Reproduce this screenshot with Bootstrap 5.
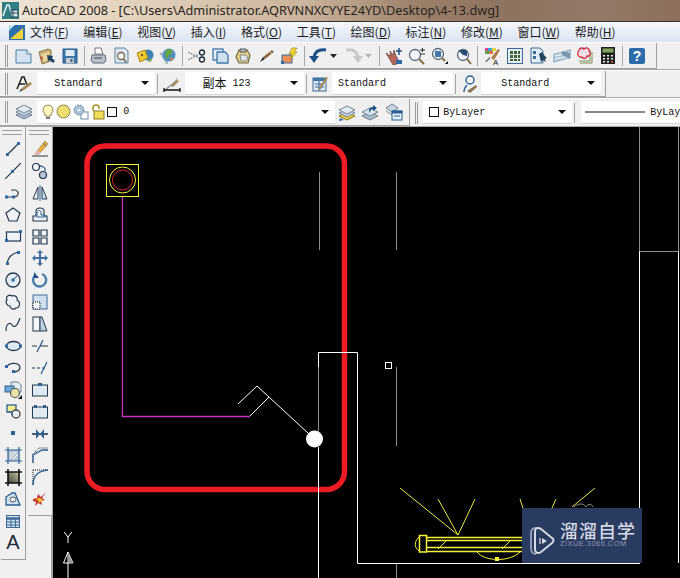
<!DOCTYPE html>
<html lang="zh">

<head>
    <meta charset="UTF-8">
    <title>AutoCAD 2008</title>
    <link href="https://cdn.jsdelivr.net/npm/bootstrap@5.3.0/dist/css/bootstrap.min.css" rel="stylesheet">
    <style>
        body {
            width: 680px;
            height: 578px;
            overflow: hidden;
            background-color: #f0f0f0;
            font-family: "Noto Sans", "Noto Sans CJK SC", sans-serif;
        }

        svg {
            display: block;
            flex: none;
        }

        .titlebar {
            height: 22px;
            padding-left: 2px;
            gap: 3px;
            font-size: 12.7px;
            color: #2a2420;
            white-space: nowrap;
            border-bottom: 1px solid #3a3028;
            background: linear-gradient(90deg, #efe6d8 0, #e2d2bd 20%, #c9b39c 45%, #9a7f69 62%, #8d7461 75%, #937a68 88%, #8b6f5b 100%);
        }

        .menubar {
            height: 20px;
            padding-left: 8px;
            font-family: "Noto Sans CJK SC", sans-serif;
            font-size: 12px;
            color: #1c1c1c;
            white-space: nowrap;
            background: linear-gradient(180deg, #f4f7fb, #dbe5f2);
        }

        .menubar span {
            margin-left: 14.6px;
        }

        .menubar span:first-of-type {
            margin-left: 4px;
        }

        .menubar u {
            text-underline-offset: 1px;
        }

        .toolrow {
            height: 28px;
            border-bottom: 1px solid #a8a8a8;
            border-top: 1px solid #fff;
        }

        .toolset {
            height: 100%;
            background-color: #f0f0f0;
            border-right: 1px solid #a0a0a0;
            border-bottom: 1px solid #a0a0a0;
        }

        .gripper {
            width: 3px;
            height: 22px;
            margin: 0 1px 0 5px;
            border-left: 1px solid #9c9c9c;
            border-right: 1px solid #9c9c9c;
            flex: none;
        }

        .tbtn {
            width: 23.3px;
            height: 22px;
            flex: none;
        }

        .tbtn-small {
            width: 12px;
            height: 22px;
            flex: none;
        }

        .tsep {
            width: 1px;
            height: 20px;
            margin: 0 2px;
            background-color: #a6a6a6;
            flex: none;
        }

        .combo {
            height: 23px;
            padding-right: 6px;
            background-color: #fff;
            border-bottom: 1px solid #d8d8d8;
            font-family: "Liberation Mono", "Noto Sans CJK SC", monospace;
            font-size: 10px;
            color: #111;
            white-space: nowrap;
            flex: none;
        }

        .combo-first {
            margin-left: 2px;
        }

        .combo-caret {
            width: 0;
            height: 0;
            margin-left: auto;
            border-left: 4px solid transparent;
            border-right: 4px solid transparent;
            border-top: 4px solid #111;
            flex: none;
        }

        .combo-sw {
            width: 10px;
            height: 10px;
            border: 1px solid #111;
            background-color: #fff;
            flex: none;
        }

        .workarea {
            height: 452px;
        }

        .dock {
            width: 53px;
            flex: none;
            border-right: 2px solid #a4a4a4;
        }

        .dock-col {
            width: 25px;
            padding-top: 1px;
            background-color: #f0f0f0;
            border-right: 1px solid #a0a0a0;
            border-bottom: 1px solid #a0a0a0;
            align-self: flex-start;
        }

        .dock-grip {
            width: 20px;
            height: 5px;
            margin: 2px 1px 3px;
            border-top: 1px solid #a0a0a0;
            border-bottom: 1px solid #a0a0a0;
        }

        .dbtn {
            width: 24px;
            height: 21.9px;
        }

        .canvas-wrap {
            background-color: #000;
            position: relative;
            overflow: hidden;
        }

        .watermark {
            position: absolute;
            left: 469px;
            top: 381px;
            width: 120px;
            height: 55px;
            padding: 13px 0 0 8px;
            background-color: #2a3b62;
            gap: 5px;
        }

        .wm-name {
            font-family: "Noto Sans CJK SC", sans-serif;
            font-size: 18px;
            line-height: 18px;
            letter-spacing: 1px;
            font-weight: 500;
            color: #d5d9e2;
            white-space: nowrap;
        }

        .wm-site {
            margin-top: 1px;
            font-family: "Liberation Sans", sans-serif;
            font-size: 7.4px;
            line-height: 8px;
            letter-spacing: .5px;
            color: #8d98b4;
            white-space: nowrap;
        }

        .k {
            fill: none;
            stroke: #25384f;
            stroke-width: 1.2;
        }

        .b {
            fill: #2c6aa6;
        }
    </style>
</head>

<body>
    <div class="titlebar d-flex align-items-center">
        <svg width="17" height="17" viewBox="0 0 17 17">
            <rect width="17" height="17" fill="#2f7f86" />
            <path d="M1 14 5 3h2l3 11" fill="none" stroke="#e8f4f0" stroke-width="1.5" />
            <rect x="9" y="8" width="7" height="7" fill="#dfeaf0" stroke="#1d4a55" />
            <path d="M11 8v7M9 11h7" stroke="#1d4a55" />
        </svg>
        <span>AutoCAD 2008 - [C:\Users\Administrator.AQRVNNXCYYE24YD\Desktop\4-13.dwg]</span>
    </div>

    <div class="menubar d-flex align-items-center">
        <svg width="18" height="18" viewBox="0 0 18 18">
            <rect x="1" y="2" width="16" height="15" fill="#2f6fa8" />
            <path d="M2 16 15 5v11z" fill="#f4d23e" />
            <path d="M1 2h6L1 8z" fill="#8fd0e0" />
            <path d="M3 0v5M1 2h5" stroke="#fff" />
        </svg>
        <span>文件(<u>F</u>)</span>
        <span>编辑(<u>E</u>)</span>
        <span>视图(<u>V</u>)</span>
        <span>插入(<u>I</u>)</span>
        <span>格式(<u>O</u>)</span>
        <span>工具(<u>T</u>)</span>
        <span>绘图(<u>D</u>)</span>
        <span>标注(<u>N</u>)</span>
        <span>修改(<u>M</u>)</span>
        <span>窗口(<u>W</u>)</span>
        <span>帮助(<u>H</u>)</span>
    </div>

    <!-- standard toolbar -->
    <div class="toolrow">
        <div class="toolset d-inline-flex align-items-center pe-2">
            <div class="gripper"></div>
            <div class="tsep invisible me-0"></div>
            <div class="tbtn d-flex align-items-center justify-content-center"><svg width="17" height="16" viewBox="0 0 17 16"><path d="M1 2h11l4 4v9H1z" fill="#d3e2ee" stroke="#4b7fa8" /><path d="M12 2v4h4" fill="#fff" stroke="#4b7fa8" /></svg></div>
            <div class="tbtn d-flex align-items-center justify-content-center"><svg width="18" height="18" viewBox="0 0 18 18"><path d="M1 5l9-3 3 1v11L4 17z" fill="#c9b27a" stroke="#8b7a4a" /><path d="M3 7l8-2 1 7-6 3z" fill="#e8d79a" /><path d="M9 8l6 1-1 2 3 3-2 2-3-3-2 1z" fill="#1c3f63" /><path d="M2 9l3 1-1 4z" fill="#c6543a" /></svg></div>
            <div class="tbtn d-flex align-items-center justify-content-center"><svg width="16" height="16" viewBox="0 0 16 16"><rect x="1" y="1" width="14" height="14" fill="#3b76ab" stroke="#2b5a88" /><rect x="3.500" y="2" width="9" height="6" fill="#dfeaf3" /><rect x="4" y="10" width="8" height="5" fill="#c9ced4" /><rect x="8.500" y="11" width="2" height="3" fill="#3b5f86" /></svg></div>
            <div class="tsep"></div>
            <div class="tbtn d-flex align-items-center justify-content-center"><svg width="17" height="17" viewBox="0 0 17 17"><path d="M5 1h6l2 6H5z" fill="#fff" stroke="#777" /><path d="M2 8h13l1 5-2 3H3l-2-3z" fill="#b9c0ca" stroke="#5d6675" /><path d="M4 11h8" stroke="#3a4350" /></svg></div>
            <div class="tbtn d-flex align-items-center justify-content-center"><svg width="17" height="18" viewBox="0 0 17 18"><path d="M2 1h10l3 3v12H2z" fill="#dbe6f0" stroke="#5d86ac" /><circle cx="8" cy="9" r="3.500" fill="#f2f7fb" stroke="#7b6a45" stroke-width="1.300" /><path d="M10.500 12l3 3.500" stroke="#7b6a45" stroke-width="1.800" /></svg></div>
            <div class="tbtn d-flex align-items-center justify-content-center"><svg width="18" height="18" viewBox="0 0 18 18"><circle cx="12" cy="8" r="5.500" fill="#3c82b8" /><path d="M1 6l8-3 3 8-8 4z" fill="#f0c832" stroke="#a6881b" /><circle cx="6" cy="8" r="1" fill="#333" /><path d="M11 14l5-3-1 4z" fill="#7ca94a" /></svg></div>
            <div class="tbtn d-flex align-items-center justify-content-center"><svg width="18" height="18" viewBox="0 0 18 18"><path d="M1 6l7 11 1-9z" fill="#d5dbe3" stroke="#98a3af" /><circle cx="10" cy="8" r="6.500" fill="#4f90c4" /><path d="M7 3l5-1 2 4-4 2-1 4-3-3z" fill="#6aa43e" /><path d="M12 10l2 1-1 3-2-1z" fill="#c98a3c" /></svg></div>
            <div class="tsep"></div>
            <div class="tbtn d-flex align-items-center justify-content-center"><svg width="18" height="14" viewBox="0 0 18 14"><path d="M0 3l11 6M0 11l11-6" stroke="#7f8a96" stroke-width="1.300" stroke-dasharray="2 1" /><circle cx="14" cy="3.500" r="2.500" fill="none" stroke="#1c2a3a" stroke-width="1.300" /><circle cx="14" cy="10.500" r="2.500" fill="none" stroke="#1c2a3a" stroke-width="1.300" /></svg></div>
            <div class="tbtn d-flex align-items-center justify-content-center"><svg width="17" height="16" viewBox="0 0 17 16"><rect x="1" y="1" width="10" height="11" fill="#e4edf5" stroke="#3f77a8" stroke-width="1.300" /><path d="M5 4h8l3 3v8H5z" fill="#cfe0ee" stroke="#3f77a8" stroke-width="1.300" /></svg></div>
            <div class="tbtn d-flex align-items-center justify-content-center"><svg width="17" height="18" viewBox="0 0 17 18"><path d="M4 3h8l3 5-2 8H4l-3-6z" fill="#e3cf86" stroke="#6f6a4a" stroke-width="1.200" /><path d="M5 2h6v3H5z" fill="#b9bec4" stroke="#555" /><path d="M5 8h6l2 3-2 3H6z" fill="#dfe6ec" stroke="#8b8f8a" /></svg></div>
            <div class="tbtn d-flex align-items-center justify-content-center"><svg width="16" height="14" viewBox="0 0 16 14"><path d="M1 13l3-5 2 2z" fill="#222" /><path d="M4 8 13 1l2 2-9 7z" fill="#8a6a42" /><path d="M11 3l2 2" stroke="#e8d8a8" /></svg></div>
            <div class="tbtn d-flex align-items-center justify-content-center"><svg width="18" height="18" viewBox="0 0 18 18"><rect x="1" y="8" width="10" height="8" fill="#e98f58" stroke="#3c6a95" /><path d="M11 1h5l-3 4h3l-6 7 1-5H8z" fill="#f5d931" stroke="#8a7a12" stroke-width=".6" /><rect x="0" y="14" width="3" height="3" fill="#2c6aa6" /></svg></div>
            <div class="tsep"></div>
            <div class="tbtn d-flex align-items-center justify-content-center"><svg width="18" height="17" viewBox="0 0 18 17"><path d="M17 3C10 2 6 5 5 10" fill="none" stroke="#1f4f86" stroke-width="3" /><path d="M0 9h10l-5 7z" fill="#1f4f86" /></svg></div>
            <div class="tbtn-small d-flex align-items-center"><svg width="7" height="4" viewBox="0 0 7 4"><path d="M0 0h7L3.500 4z" fill="#222" /></svg></div>
            <div class="tbtn d-flex align-items-center justify-content-center"><svg width="18" height="17" viewBox="0 0 18 17"><path d="M1 3C8 2 12 5 13 10" fill="none" stroke="#c9c9c9" stroke-width="3" /><path d="M18 9H8l5 7z" fill="#c9c9c9" /></svg></div>
            <div class="tbtn-small d-flex align-items-center"><svg width="7" height="4" viewBox="0 0 7 4"><path d="M0 0h7L3.500 4z" fill="#b5b5b5" /></svg></div>
            <div class="tsep"></div>
            <div class="tbtn d-flex align-items-center justify-content-center"><svg width="18" height="18" viewBox="0 0 18 18"><path d="M1 6l5 3-1-5 3 4 1-5 2 6 2 3-1 5-4 1z" fill="#b5685a" stroke="#6e4038" stroke-width=".7" /><path d="M14 1v7M11 4h6" stroke="#1f4f86" stroke-width="1.500" /><rect x="11" y="13" width="6" height="4" fill="#2c6aa6" /></svg></div>
            <div class="tbtn d-flex align-items-center justify-content-center"><svg width="18" height="18" viewBox="0 0 18 18"><circle cx="7" cy="8" r="5.500" fill="#f2f6fa" stroke="#59697c" stroke-width="1.300" /><path d="M11 12l5 5" stroke="#8a6a3a" stroke-width="2" /><path d="M12 3h5M14.500 1v4M12 7h5" stroke="#333" /></svg></div>
            <div class="tbtn d-flex align-items-center justify-content-center"><svg width="18" height="18" viewBox="0 0 18 18"><circle cx="7" cy="7" r="5.500" fill="#eef3f8" stroke="#59697c" stroke-width="1.300" /><rect x="4" y="4" width="6" height="6" fill="#3f77a8" /><path d="M11 11l3 3" stroke="#8a6a3a" stroke-width="2" /><path d="M14 17l3-3v3z" fill="#111" /></svg></div>
            <div class="tbtn d-flex align-items-center justify-content-center"><svg width="18" height="18" viewBox="0 0 18 18"><circle cx="8" cy="8" r="5.500" fill="#eef3f8" stroke="#59697c" stroke-width="1.300" /><path d="M3 3h9v6L8 8z" fill="#2b4f73" /><path d="M12 12l4 5" stroke="#8a6a3a" stroke-width="2" /></svg></div>
            <div class="tsep"></div>
            <div class="tbtn d-flex align-items-center justify-content-center"><svg width="18" height="18" viewBox="0 0 18 18"><path d="M2 1h3v3H2z" fill="#e0408a" /><path d="M5 1h4v3H5z" fill="#37a6d8" /><path d="M9 1h4v3H9z" fill="#e4d23a" /><path d="M2 4h4v3H2z" fill="#54a84a" /><path d="M6 4h4v3H6z" fill="#e2703a" /><path d="M3 15c0-3 5-2 3-5" fill="none" stroke="#666" stroke-width="1.200" /><path d="M8 11l7-9 2 1-6 10z" fill="#a87a4a" /><text x="10" y="17.500" font-family="Liberation Sans" font-size="8" fill="#222">A</text></svg></div>
            <div class="tbtn d-flex align-items-center justify-content-center"><svg width="16" height="16" viewBox="0 0 16 16"><rect x=".5" y=".5" width="15" height="15" fill="#e6eff6" stroke="#3c6a95" /><path d="M3 3h3v3H3zM7 3h3v3H7zM11 3h2v3h-2zM3 7h3v3H3zM7 7h3v3H7zM11 7h2v3h-2zM3 11h3v2H3zM7 11h3v2H7zM11 11h2v2h-2z" fill="#3f5f3a" /></svg></div>
            <div class="tbtn d-flex align-items-center justify-content-center"><svg width="18" height="17" viewBox="0 0 18 17"><path d="M1 1h9l3 3v12H1z" fill="#e2edf5" stroke="#3c6a95" /><path d="M3 4h3v3H3zM3 9h3v3H3z" fill="#3c6a95" /><path d="M9 7l3-2 2 3 3 3-2 1 1 3-3-2-2 2z" fill="#27445f" /></svg></div>
            <div class="tbtn d-flex align-items-center justify-content-center"><svg width="20" height="16" viewBox="0 0 20 16"><path d="M1 6l18-5v9L1 15z" fill="#a4bdd0" /><path d="M3 8l15-3M3 11l15-3" stroke="#e8eef3" stroke-width="1.400" /><path d="M10 3l8 2v6l-8-4z" fill="#7b97ad" /></svg></div>
            <div class="tbtn d-flex align-items-center justify-content-center"><svg width="18" height="18" viewBox="0 0 18 18"><path d="M16 5v11H4M14 3v11H3" fill="none" stroke="#7d8c55" /><path d="M3 3c1-3 5-2 5-1 2-2 6-1 5 2 3 2 0 6-2 5 0 3-5 3-5 1-3 1-6-2-3-7z" fill="#f2dfe3" stroke="#d12a3a" stroke-width="1.300" /></svg></div>
            <div class="tbtn d-flex align-items-center justify-content-center"><svg width="14" height="17" viewBox="0 0 14 17"><rect width="14" height="17" fill="#222" /><rect x="1.500" y="1.500" width="11" height="4" fill="#7fa15b" /><path d="M2 8h2v1.500H2zM6 8h2v1.500H6zM10 8h2v1.500h-2zM2 11h2v1.500H2zM6 11h2v1.500H6zM10 11h2v1.500h-2zM2 14h2v1.500H2zM6 14h2v1.500H6z" fill="#eee" /><rect x="10" y="14" width="2" height="1.500" fill="#d9552e" /></svg></div>
            <div class="tsep"></div>
            <div class="tbtn d-flex align-items-center justify-content-center"><svg width="16" height="16" viewBox="0 0 16 16"><rect width="16" height="16" rx="2" fill="#2d6cab" /><text x="8" y="13" text-anchor="middle" font-family="Liberation Sans" font-size="14" font-weight="700" fill="#fff">?</text></svg></div>
        </div>
    </div>

    <!-- styles toolbar -->
    <div class="toolrow">
        <div class="toolset d-inline-flex align-items-center pe-1">
            <div class="gripper"></div>
            <div class="tsep invisible me-0"></div>
            <div class="tbtn d-flex align-items-center justify-content-center"><svg width="18" height="18" viewBox="0 0 18 18"><path d="M2 14 7 2h2l3 8M4 9h6" fill="none" stroke="#1d1d1d" stroke-width="1.500" /><path d="M5 16l2-3 8-6 2 2-8 6z" fill="#a58a5a" /><path d="M4 17l2-3 2 1z" fill="#333" /></svg></div>
            <div class="combo combo-first d-flex align-items-center" style="width: 118px; padding-left: 17px;">Standard<span class="combo-caret"></span></div>
            <div class="tsep"></div>
            <div class="tbtn d-flex align-items-center justify-content-center"><svg width="18" height="18" viewBox="0 0 18 18"><path d="M1 15 12 6l3-4-2 5L3 15z" fill="#8a8f96" /><path d="M8 11l6-6 2 1-6 6z" fill="#a58a5a" /><path d="M1 13v4M17 13v4M1 15h16" stroke="#111" stroke-width="1.300" /></svg></div>
            <div class="combo d-flex align-items-center" style="width: 119px; padding-left: 18px; margin-left: 1px;"><span style="font-size: 12px; font-family: 'Noto Sans CJK SC', sans-serif;">副本</span>&nbsp;123<span class="combo-caret"></span></div>
            <div class="tsep"></div>
            <div class="tbtn d-flex align-items-center justify-content-center"><svg width="17" height="17" viewBox="0 0 17 17"><rect x="1" y="3" width="13" height="13" fill="#dce8f2" stroke="#3c6a95" /><path d="M1 3h13v3H1z" fill="#3f77a8" /><path d="M3 9h9M3 12h9M7 6v10" stroke="#3c6a95" /><path d="M6 14 14 2l2 1-8 12z" fill="#a58a5a" /></svg></div>
            <div class="combo d-flex align-items-center" style="width: 121px; padding-left: 6px;">Standard<span class="combo-caret"></span></div>
            <div class="tsep"></div>
            <div class="tbtn d-flex align-items-center justify-content-center"><svg width="17" height="18" viewBox="0 0 17 18"><circle cx="9" cy="5" r="4" fill="#f2f6fa" stroke="#2c5f92" stroke-width="1.400" /><path d="M3 17c0-4 2-6 3-7" fill="none" stroke="#2c5f92" stroke-width="1.400" /><path d="M6 16l9-6 1 2-7 6z" fill="#8a7250" /></svg></div>
            <div class="combo d-flex align-items-center" style="width: 120px; padding-left: 20px;">Standard<span class="combo-caret"></span></div>
        </div>
    </div>

    <!-- layers and properties toolbars -->
    <div class="toolrow d-flex" style="height: 29px;">
        <div class="toolset d-flex align-items-center pe-1">
            <div class="gripper"></div>
            <div class="tsep invisible me-0"></div>
            <div class="tbtn d-flex align-items-center justify-content-center"><svg width="18" height="16" viewBox="0 0 18 16"><path d="M1 11l8-4 8 4-8 4z" fill="#a9bccd" stroke="#6f8496" /><path d="M1 8l8-4 8 4-8 4z" fill="#c7d6e2" stroke="#6f8496" /><path d="M1 5l8-4 8 4-8 4z" fill="#e2eaf0" stroke="#6f8496" /></svg></div>
            <div class="combo combo-first d-flex align-items-center" style="width: 298px; padding-left: 5px; gap: 2px;">
                <svg width="12" height="16" viewBox="0 0 12 16"><path d="M6 1a5 5 0 0 1 3 9v2H3v-2A5 5 0 0 1 6 1z" fill="#fff6b8" stroke="#8e8a6a" /><path d="M4 14h4" stroke="#777" stroke-width="2" /></svg>
                <svg width="15" height="15" viewBox="0 0 15 15"><circle cx="7.500" cy="7.500" r="6.500" fill="#eedd72" stroke="#858a4a" /></svg>
                <svg width="16" height="16" viewBox="0 0 16 16"><rect x="8" y="8" width="7" height="7" fill="#fff" stroke="#6f8ca8" /><circle cx="6" cy="6" r="5" fill="#a8c0d6" stroke="#6a8299" stroke-dasharray="2 1" /><circle cx="6" cy="6" r="1.500" fill="#e6edf3" /></svg>
                <svg width="14" height="16" viewBox="0 0 14 16"><path d="M2 7V4a3 3 0 0 1 6 0v1" fill="none" stroke="#a49220" stroke-width="1.500" /><rect x="3" y="7" width="10" height="8" fill="#f0de5a" stroke="#8a7a1a" /></svg>
                <span class="combo-sw"></span><span class="ms-1">0</span><span class="combo-caret"></span>
            </div>
            <div class="tbtn d-flex align-items-center justify-content-center"><svg width="18" height="17" viewBox="0 0 18 17"><path d="M1 12l8-4 8 4-8 4z" fill="#f0d23c" stroke="#8a7a1a" /><path d="M1 9l8-4 8 4-8 4z" fill="#c7d6e2" stroke="#6f8496" /><path d="M1 6l8-4 8 4-8 4z" fill="#e2eaf0" stroke="#6f8496" /><path d="M2 14l4 2-5 1z" fill="#2c5f92" /></svg></div>
            <div class="tbtn d-flex align-items-center justify-content-center"><svg width="18" height="17" viewBox="0 0 18 17"><path d="M1 12l8-4 8 4-8 4z" fill="#a9bccd" stroke="#6f8496" /><path d="M1 8l8-4 8 4-8 4z" fill="#dbe5ec" stroke="#6f8496" /><path d="M9 9C7 6 8 3 12 3V1l4 3-4 3V5c-2 0-3 2-3 4z" fill="#1f4f86" /></svg></div>
            <div class="tbtn d-flex align-items-center justify-content-center"><svg width="18" height="18" viewBox="0 0 18 18"><path d="M1 5l6-4 6 4-6 4z" fill="#c7d6e2" stroke="#6f8496" /><path d="M1 8l6 4 6-4" fill="none" stroke="#6f8496" /><rect x="7" y="8" width="10" height="9" fill="#e6eff6" stroke="#2c5f92" /><path d="M7 8h10v2H7zM9 13h6" fill="#2c5f92" stroke="#2c5f92" /></svg></div>
        </div>
        <div class="toolset d-flex align-items-center flex-grow-1" style="border: 0;">
            <div class="gripper"></div>
            <div class="combo d-flex align-items-center gap-1 ms-1" style="width: 149px; padding-left: 6px;"><span class="combo-sw"></span><span>ByLayer</span><span class="combo-caret"></span></div>
            <div class="tsep"></div>
            <div class="combo d-flex align-items-center ms-1" style="width: 110px; padding-left: 4px; gap: 5px;">
                <svg width="60" height="2" viewBox="0 0 60 2"><path d="M0 1h60" stroke="#111" /></svg>
                <span>ByLayer</span>
            </div>
        </div>
    </div>

    <div class="workarea d-flex">
        <div class="dock d-flex gap-0">
            <div class="dock-col" style="height: 433px; margin-left: 1px;">
                <div class="dock-grip"></div>
                <div class="dbtn d-flex align-items-center justify-content-center"><svg width="16" height="16" viewBox="0 0 16 16"><path class="k" d="M2 14 14 2" /><rect class="b" x="1" y="12" width="3" height="3" /><rect class="b" x="12" y="1" width="3" height="3" /></svg></div>
                <div class="dbtn d-flex align-items-center justify-content-center"><svg width="16" height="16" viewBox="0 0 16 16"><path class="k" d="M0 16 16 0" stroke-width="1.500" /><rect class="b" x="6" y="7" width="3" height="3" /></svg></div>
                <div class="dbtn d-flex align-items-center justify-content-center"><svg width="16" height="16" viewBox="0 0 16 16"><path class="k" d="M1 12h7c6 0 7-6 2-7H6" /><rect class="b" x="0" y="10.500" width="3" height="3" /><rect class="b" x="7" y="10.500" width="3" height="3" /></svg></div>
                <div class="dbtn d-flex align-items-center justify-content-center"><svg width="16" height="16" viewBox="0 0 16 16"><path d="M8 1l7 5-3 8H4L1 6z" fill="#eef3f8" stroke="#25384f" stroke-width="1.200" /></svg></div>
                <div class="dbtn d-flex align-items-center justify-content-center"><svg width="17" height="13" viewBox="0 0 17 13"><rect x="1.500" y="2" width="14" height="9" fill="#eef3f8" stroke="#25384f" stroke-width="1.200" /><rect class="b" x="0" y="9" width="3" height="3" /><rect class="b" x="14" y="0" width="3" height="3" /></svg></div>
                <div class="dbtn d-flex align-items-center justify-content-center"><svg width="16" height="16" viewBox="0 0 16 16"><path class="k" d="M2 14C3 7 8 3 14 2" /><rect class="b" x="1" y="12" width="3" height="3" /><rect class="b" x="12" y="1" width="3" height="3" /></svg></div>
                <div class="dbtn d-flex align-items-center justify-content-center"><svg width="16" height="16" viewBox="0 0 16 16"><circle cx="8" cy="8" r="7" fill="#e3ebf3" stroke="#25384f" stroke-width="1.300" /><path d="M8 8l4-4" stroke="#25384f" /><rect class="b" x="6.500" y="6.500" width="3" height="3" /></svg></div>
                <div class="dbtn d-flex align-items-center justify-content-center"><svg width="16" height="16" viewBox="0 0 16 16"><path d="M2 6C0 2 5 0 7 2c3-1 6 1 5 4 4 2 3 8-1 8-2 2-6 1-6-2-3 0-5-4-3-6z" fill="#eef3f8" stroke="#25384f" stroke-width="1.200" /></svg></div>
                <div class="dbtn d-flex align-items-center justify-content-center"><svg width="16" height="16" viewBox="0 0 16 16"><path class="k" d="M1 15C1 7 5 6 7 9s5 2 8-7" /></svg></div>
                <div class="dbtn d-flex align-items-center justify-content-center"><svg width="17" height="12" viewBox="0 0 17 12"><ellipse cx="8.500" cy="6" rx="7" ry="4.500" fill="#dce7f1" stroke="#25384f" stroke-width="1.300" /><rect class="b" x="0" y="4.500" width="3" height="3" /><rect class="b" x="14" y="4.500" width="3" height="3" /></svg></div>
                <div class="dbtn d-flex align-items-center justify-content-center"><svg width="16" height="12" viewBox="0 0 16 12"><path class="k" d="M2 5c2-5 13-5 13 1-1 4-6 4-7 4" /><rect class="b" x="0" y="3" width="3" height="3" /><rect class="b" x="7" y="8" width="3" height="3" /></svg></div>
                <div class="dbtn d-flex align-items-center justify-content-center"><svg width="18" height="18" viewBox="0 0 18 18"><path d="M7 1h7l3 3v7H7z" fill="#e3ebf3" stroke="#6a8299" /><rect x="1" y="5" width="9" height="6" fill="#6fa5d2" stroke="#2c5f92" /><circle cx="11" cy="12" r="4.500" fill="#e8e3a8" stroke="#555" stroke-width="1.200" /><path d="M14 18l4-4v4z" fill="#111" /></svg></div>
                <div class="dbtn d-flex align-items-center justify-content-center"><svg width="15" height="15" viewBox="0 0 15 15"><rect x="1" y="1" width="9" height="7" fill="#f5ec8c" stroke="#2c5f92" stroke-width="1.300" /><circle cx="10" cy="10" r="4" fill="#e9eef2" stroke="#444" stroke-width="1.300" /><path d="M1 8h5v3" fill="none" stroke="#2c5f92" /></svg></div>
                <div class="dbtn d-flex align-items-center justify-content-center"><svg width="5" height="5" viewBox="0 0 5 5"><rect width="4" height="4" fill="#2c5f92" /></svg></div>
                <div class="dbtn d-flex align-items-center justify-content-center"><svg width="17" height="17" viewBox="0 0 17 17"><rect x="3" y="3" width="11" height="11" fill="#b9c7d6" /><path d="M3 0v17M14 0v17M0 3h17M0 14h17" stroke="#2c5f92" stroke-width="1.200" /><path d="M5 11l6-6M5 8l3-3M8 12l5-5" stroke="#fff" /></svg></div>
                <div class="dbtn d-flex align-items-center justify-content-center"><svg width="17" height="17" viewBox="0 0 17 17"><defs><linearGradient id="grad1" x1="0" y1="1" x2="1" y2="0"><stop offset="0" stop-color="#3e3e3e" /><stop offset="1" stop-color="#c9c9a0" /></linearGradient></defs><rect x="3" y="3" width="11" height="11" fill="url(#grad1)" /><path d="M3 0v17M14 0v17M0 3h17M0 14h17" stroke="#111" stroke-width="1.600" /></svg></div>
                <div class="dbtn d-flex align-items-center justify-content-center"><svg width="16" height="14" viewBox="0 0 16 14"><path d="M1 5l6-4h3l5 12H1z" fill="#cfe0ee" stroke="#2c5f92" stroke-width="1.300" /><ellipse cx="8" cy="7.500" rx="3" ry="2.500" fill="#eef3f8" stroke="#555" /></svg></div>
                <div class="dbtn d-flex align-items-center justify-content-center"><svg width="14" height="13" viewBox="0 0 14 13"><rect x=".5" y=".5" width="13" height="12" fill="#cfe0ee" stroke="#3c6a95" /><path d="M.5 3.500h13" stroke="#3c6a95" stroke-width="2.500" /><path d="M5 4v8M9.500 4v8M1 7h12M1 10h12" stroke="#3c6a95" /></svg></div>
                <div class="dbtn d-flex align-items-center justify-content-center" style="font: 20px 'Liberation Sans', sans-serif; color: #1c2a3a;">A</div>
            </div>
            <div class="dock-col" style="height: 389px; margin-left: 2px;">
                <div class="dock-grip"></div>
                <div class="dbtn d-flex align-items-center justify-content-center"><svg width="17" height="17" viewBox="0 0 17 17"><path d="M0 16h16" stroke="#333" /><path d="M3 14 13 1l3 3-9 10z" fill="#e8b23a" stroke="#8a6a2a" stroke-width=".6" /><path d="M3 14l3-4 3 3-2 1z" fill="#e8b2b8" /><path d="M11 3l3 3" stroke="#3c6a95" /></svg></div>
                <div class="dbtn d-flex align-items-center justify-content-center"><svg width="16" height="16" viewBox="0 0 16 16"><circle cx="4" cy="4" r="3.500" fill="#f2f6fa" stroke="#25384f" stroke-width="1.200" /><circle cx="11" cy="12" r="3.500" fill="#b9c7d6" stroke="#25384f" stroke-width="1.200" /><path d="M8 3c3 0 6 2 5 5" fill="none" stroke="#2c5f92" stroke-width="1.300" /></svg></div>
                <div class="dbtn d-flex align-items-center justify-content-center"><svg width="16" height="16" viewBox="0 0 16 16"><path d="M6 2v12H1z" fill="#eef3f8" stroke="#25384f" /><path d="M10 2v12h5z" fill="#cfe0ee" stroke="#25384f" /><path d="M8 0v16" stroke="#2c5f92" /></svg></div>
                <div class="dbtn d-flex align-items-center justify-content-center"><svg width="16" height="15" viewBox="0 0 16 15"><path d="M1 9h3V4c0-4 8-4 8 0v5h3v5H1z" fill="#eef3f8" stroke="#25384f" stroke-width="1.100" /><path d="M5 10V5c0-2 4-2 4 0v3h4v2z" fill="none" stroke="#2c5f92" /></svg></div>
                <div class="dbtn d-flex align-items-center justify-content-center"><svg width="16" height="16" viewBox="0 0 16 16"><path d="M1 1h6v6H1zM9 1h6v6H9zM1 9h6v6H1zM9 9h6v6H9z" fill="#f2f6fa" stroke="#25384f" stroke-width="1.200" /></svg></div>
                <div class="dbtn d-flex align-items-center justify-content-center"><svg width="16" height="16" viewBox="0 0 16 16"><path d="M8 0l3 3H9v4h4V5l3 3-3 3V9H9v4h2l-3 3-3-3h2V9H3v2L0 8l3-3v2h4V3H5z" fill="#3f6f9e" /></svg></div>
                <div class="dbtn d-flex align-items-center justify-content-center"><svg width="16" height="16" viewBox="0 0 16 16"><path d="M3.500 3A6.500 6.500 0 1 0 10 2" fill="none" stroke="#4a7eac" stroke-width="2.400" /><path d="M2 0v6h5z" fill="#1f4f86" /></svg></div>
                <div class="dbtn d-flex align-items-center justify-content-center"><svg width="16" height="16" viewBox="0 0 16 16"><rect x="1" y="1" width="14" height="14" fill="#cfe0ee" stroke="#3c6a95" /><rect x="1" y="8" width="7" height="7" fill="#f2f6fa" stroke="#111" stroke-dasharray="1 1" /></svg></div>
                <div class="dbtn d-flex align-items-center justify-content-center"><svg width="16" height="16" viewBox="0 0 16 16"><rect x="1" y="1" width="7" height="14" fill="#f2f6fa" stroke="#25384f" /><path d="M8 1h2l5 14H8z" fill="#bcd0e2" stroke="#25384f" /></svg></div>
                <div class="dbtn d-flex align-items-center justify-content-center"><svg width="16" height="14" viewBox="0 0 16 14"><path d="M0 7h5M8 7h8" stroke="#25384f" stroke-width="1.200" /><path d="M5 13 11 1" stroke="#2c5f92" stroke-width="1.300" /></svg></div>
                <div class="dbtn d-flex align-items-center justify-content-center"><svg width="16" height="14" viewBox="0 0 16 14"><path d="M0 7h3M5 7h3M10 7h3" stroke="#25384f" stroke-width="1.200" /><path d="M9 13 15 1" stroke="#2c5f92" stroke-width="1.300" /></svg></div>
                <div class="dbtn d-flex align-items-center justify-content-center"><svg width="16" height="14" viewBox="0 0 16 14"><rect x=".5" y="2" width="15" height="11" fill="#dfe9f2" stroke="#25384f" /><rect x="6" y="0" width="4" height="3" fill="#2c5f92" /></svg></div>
                <div class="dbtn d-flex align-items-center justify-content-center"><svg width="16" height="14" viewBox="0 0 16 14"><rect x=".5" y="2" width="15" height="11" fill="#dfe9f2" stroke="#25384f" /><rect x="2" y="0" width="3" height="3" fill="#2c5f92" /><rect x="11" y="0" width="3" height="3" fill="#2c5f92" /></svg></div>
                <div class="dbtn d-flex align-items-center justify-content-center"><svg width="16" height="10" viewBox="0 0 16 10"><path d="M0 5h16" stroke="#1c2a3a" stroke-width="1.500" /><path d="M4 0l4 5-4 5zM12 0 8 5l4 5z" fill="#2c5f92" /></svg></div>
                <div class="dbtn d-flex align-items-center justify-content-center"><svg width="16" height="16" viewBox="0 0 16 16"><path d="M1 16V7L7 1h9" fill="none" stroke="#25384f" stroke-dasharray="1 1" /><path d="M1 16V8L10 3h6" fill="none" stroke="#2c5f92" stroke-width="1.300" /></svg></div>
                <div class="dbtn d-flex align-items-center justify-content-center"><svg width="16" height="16" viewBox="0 0 16 16"><path d="M1 1h15M1 1v15" fill="none" stroke="#111" stroke-dasharray="1 1" /><path d="M1 16C1 6 6 2 16 1" fill="none" stroke="#2c5f92" stroke-width="1.500" /></svg></div>
                <div class="dbtn d-flex align-items-center justify-content-center"><svg width="16" height="16" viewBox="0 0 16 16"><path d="M1 8l4-1 1-4 3 3 5-5-4 6 3 2-4 1 1 4-4-2-3 3 1-4-3-1z" fill="#c9342c" /><path d="M3 8l3 1 1 3 2-2 2-1-3-2z" fill="#f0c832" /></svg></div>
            </div>
        </div>

        <div class="canvas-wrap flex-grow-1">
            <!-- drawing area, coordinates are the screen ones -->
            <svg width="627" height="451" viewBox="53 127 627 451">
                <rect x="87" y="146" width="257.500" height="343.500" rx="18" fill="none" stroke="#ed1c24" stroke-width="5.500" />
                <rect x="106.500" y="164.500" width="32" height="32" fill="none" stroke="#f5f53c" />
                <circle cx="122.500" cy="180" r="13" fill="none" stroke="#f5f53c" />
                <circle cx="122.500" cy="180" r="10" fill="none" stroke="#d8262c" />
                <path d="M122.500 197V416.500H250" fill="none" stroke="#c832c0" stroke-width="1.300" />
                <path d="M238 404 257 386 308 433M250 416 269 397" fill="none" stroke="#fff" />
                <circle cx="314.500" cy="439" r="8.500" fill="#fff" />
                <path d="M318.500 367V352.500H357.500V563.500H640M318.500 447V578M639.500 251V563M678.500 251V563" fill="none" stroke="#fff" />
                <path d="M319.500 172V250M396.500 172V250M396.500 367V446M318.500 367V431M396.500 564V578M639.500 127V251M678.500 127V251M639.500 251.500H678.500" fill="none" stroke="#8c8c8c" />
                <rect x="385.500" y="362.500" width="6" height="6" fill="none" stroke="#fff" />
                <!-- yellow part under the logo -->
                <g fill="none" stroke="#f5f53c">
                    <path d="M400 488 458 535M438 499 458 535M475 499 458 535M520 499 523 508M556 499 552 508M595 488 572 507" stroke="#e8e84a" />
                    <path d="M426 537.500H522M426 540.500H522M426 547.500H522M426 551.500H522" stroke-width="1.400" />
                    <rect x="419.500" y="535.500" width="7" height="16.500" stroke-width="1.500" />
                    <path d="M419 537C414 542 414 547 419 551M477 552C485 562 510 562 520 552M438 549 446 541M502 549 510 541" />
                    <rect x="495.500" y="557.500" width="3" height="3" fill="#f5f53c" />
                </g>
                <path d="M574 507C578 503 584 503 586 507M586 507C588 503 592 504 593 507" fill="none" stroke="#8c8c8c" />
                <!-- ucs icon -->
                <path d="M64 532 68 537 72 532M68 537V543M68 552 63.500 563H73ZM68 552V578" fill="none" stroke="#fff" />
                <path d="M68 552 73 563H68Z" fill="#9a9a9a" />
            </svg>
            <div class="watermark d-flex">
                <svg width="25" height="32" viewBox="0 0 25 32" class="mt-1">
                    <path d="M6 3C2 3 1 5 1 8V22C1 27 2 29 6 29" fill="none" stroke="#8f9ab4" stroke-width="2" />
                    <path d="M7 3C5 3 5 6 5 8V24C5 28 8 29 11 27L22 18C24 16 24 14 22 13L11 4C10 3 8 3 7 3Z" fill="none" stroke="#d5d9e2" stroke-width="2" />
                    <path d="M10 13V19" stroke="#d5d9e2" stroke-width="1.300" />
                    <path d="M12 13 17 16 12 19Z" fill="#d5d9e2" />
                </svg>
                <div>
                    <div class="wm-name">溜溜自学</div>
                    <div class="wm-site">ZIXUE.3066.COM</div>
                </div>
            </div>
        </div>
    </div>

    <script src="https://cdn.jsdelivr.net/npm/bootstrap@5.3.0/dist/js/bootstrap.bundle.min.js"></script>
</body>

</html>
